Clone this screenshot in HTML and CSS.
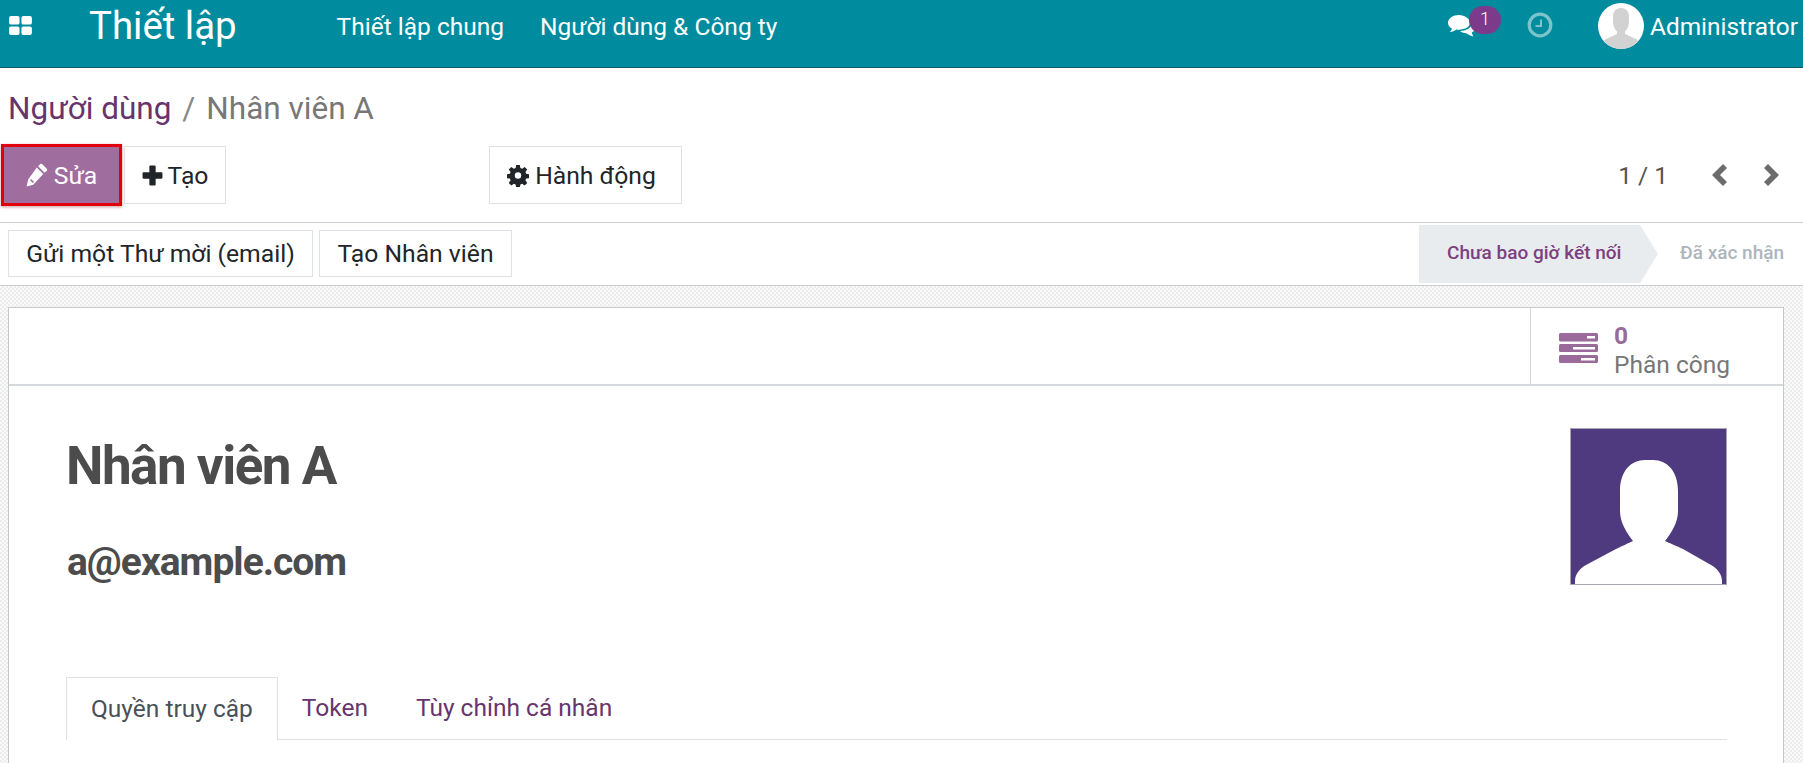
FILE: index.html
```html
<!DOCTYPE html>
<html lang="vi">
<head>
<meta charset="utf-8">
<title>Thiết lập</title>
<link rel="stylesheet" href="styles.css">
</head>
<body>
<header class="topbar">
  <svg class="apps" viewBox="0 0 24 20"><path d="M0 2a2 2 0 0 1 2-2h7a2 2 0 0 1 2 2v5a2 2 0 0 1-2 2H2a2 2 0 0 1-2-2zM13 2a2 2 0 0 1 2-2h7a2 2 0 0 1 2 2v5a2 2 0 0 1-2 2h-7a2 2 0 0 1-2-2zM0 13a2 2 0 0 1 2-2h7a2 2 0 0 1 2 2v5a2 2 0 0 1-2 2H2a2 2 0 0 1-2-2zM13 13a2 2 0 0 1 2-2h7a2 2 0 0 1 2 2v5a2 2 0 0 1-2 2h-7a2 2 0 0 1-2-2z" fill="#fff"/></svg>
  <span class="brand">Thiết lập</span>
  <nav class="menu"><span>Thiết lập chung</span><span>Người dùng &amp; Công ty</span></nav>
  <div class="systray">
    <div class="chat">
      <svg class="chat-icon" viewBox="0 0 28 24"><path d="M11 1C5 1 0 4.400 0 8.800c0 2.500 1.600 4.600 4 6-.4 1.300-1.200 2.400-2.200 3.300 2.500-.3 4.800-1.200 6.500-2.600.9.100 1.800.2 2.700.2 6 0 11-3 11-6.900S17 1 11 1z" fill="#fff"/><path d="M24 8.500c.2 4.800-5 8.400-12 8.600 1.600 1.500 4 2.200 6.400 2.100 1.900 1.500 4.200 2.600 7.100 3.300-1-1.300-1.500-2.500-1.700-3.900 2.300-1.200 3.700-3 3.700-5 0-2-1.400-3.900-3.500-5.100z" fill="#fff"/></svg>
      <span class="badge">1</span>
    </div>
    <svg class="clock" viewBox="0 0 26 26"><circle cx="13" cy="13" r="10.800" fill="none" stroke="#7cc4ca" stroke-width="3.200"/><path d="M14 7.500v6.500H8.500" fill="none" stroke="#7cc4ca" stroke-width="2"/></svg>
    <div class="user">
      <svg class="avatar" viewBox="0 0 46 46"><defs><clipPath id="round"><circle cx="23" cy="23" r="23"/></clipPath></defs><g clip-path="url(#round)"><rect width="46" height="46" fill="#fff"/><path d="M15 13c0-5 3.500-8 8-8s8 3 8 8v6c0 4-1.500 7-4 9.500v2.500l11 5c2 1 3 3 3 6v4H5v-4c0-3 1-5 3-6l11-5v-2.500c-2.500-2.500-4-5.500-4-9.500z" fill="#d2d2d2"/></g></svg>
      <span class="username">Administrator</span>
    </div>
  </div>
</header>

<section class="control">
  <div class="breadcrumb"><span class="crumb-link">Người dùng</span><span class="crumb-sep">/</span><span class="crumb-now">Nhân viên A</span></div>
  <div class="actions">
    <button class="btn btn-primary">
      <svg class="ico ico-pencil" viewBox="0 0 20 22"><path d="M14.600 1l4.400 4.300c.5.500.5 1.200 0 1.700l-2 2L11 3l2-2c.5-.4 1.200-.4 1.600 0zM9.800 4.200l5.900 5.900L6.600 20 .5 21.500l1.400-6.300zM3.600 15.700l2.700 2.700 1-1-2.700-2.700z" fill="#fff"/></svg>Sửa
    </button>
    <button class="btn btn-new">
      <svg class="ico ico-plus" viewBox="0 0 20 20"><path d="M7 1.500A1 1 0 0 1 8 .5h4a1 1 0 0 1 1 1V7h5.500a1 1 0 0 1 1 1v4a1 1 0 0 1-1 1H13v5.500a1 1 0 0 1-1 1H8a1 1 0 0 1-1-1V13H1.500a1 1 0 0 1-1-1V8a1 1 0 0 1 1-1H7z" fill="#212529"/></svg>Tạo
    </button>
    <button class="btn btn-action">
      <svg class="ico ico-gear" viewBox="0 0 24 24"><path fill-rule="evenodd" d="M10 .5h4l.6 3.400 1.900.8 2.800-2 2.800 2.800-2 2.800.8 1.900 3.600.6v4l-3.600.6-.8 1.900 2 2.800-2.800 2.800-2.800-2-1.900.8-.6 3.500h-4l-.6-3.500-1.900-.8-2.800 2-2.800-2.800 2-2.800-.8-1.900-3.600-.6v-4l3.600-.6.8-1.900-2-2.800 2.800-2.800 2.800 2 1.900-.8zM12 8.500a3.500 3.500 0 1 0 0 7 3.500 3.500 0 0 0 0-7z" fill="#212529"/></svg>Hành động
    </button>
    <div class="pager">
      <span class="pager-text">1 / 1</span>
      <svg class="chev" viewBox="0 0 15 22"><path d="M11 0l4 4-7 7 7 7-4 4L0 11z" fill="#6c6c6c"/></svg>
      <svg class="chev" viewBox="0 0 15 22"><path d="M4 0L0 4l7 7-7 7 4 4 11-11z" fill="#6c6c6c"/></svg>
    </div>
  </div>
</section>

<section class="statusbar">
  <div class="status-btns">
    <button class="btn btn-status">Gửi một Thư mời (email)</button>
    <button class="btn btn-status">Tạo Nhân viên</button>
  </div>
  <div class="stages">
    <span class="stage stage-on">Chưa bao giờ kết nối</span>
    <span class="stage stage-off">Đã xác nhận</span>
  </div>
</section>

<main class="content">
  <article class="sheet">
    <div class="stat-row">
      <div class="stat">
        <svg class="stat-icon" viewBox="0 0 39 30"><path fill-rule="evenodd" d="M1.500 0h36a1.500 1.500 0 0 1 1.500 1.500v5.500a1.500 1.500 0 0 1-1.500 1.500h-36A1.500 1.500 0 0 1 0 7V1.500A1.500 1.500 0 0 1 1.500 0zM28 3v2.500h8V3zM1.500 11h36a1.500 1.500 0 0 1 1.500 1.500v5a1.500 1.500 0 0 1-1.500 1.500h-36A1.500 1.500 0 0 1 0 17.500v-5A1.500 1.500 0 0 1 1.500 11zM14 14v2.500h22V14zM1.500 22h36a1.500 1.500 0 0 1 1.500 1.500v5a1.500 1.500 0 0 1-1.500 1.500h-36A1.500 1.500 0 0 1 0 28.500v-5A1.500 1.500 0 0 1 1.500 22zM22 25v2.500h14V25z" fill="#9a6b9a"/></svg>
        <div class="stat-text"><span class="stat-num">0</span><span class="stat-label">Phân công</span></div>
      </div>
    </div>
    <div class="sheet-body">
      <div class="head">
        <div class="titles">
          <h1 class="name">Nhân viên A</h1>
          <h2 class="mail">a@example.com</h2>
        </div>
        <div class="photo">
          <svg viewBox="0 0 155 155" class="photo-svg"><rect width="155" height="155" fill="#4f3a7f"/><path d="M49 62C49 42 60 31 74 31H82C96 31 107 42 107 62V82C107 94 100 104 94 112C98 114 106 117 112 120L140 136C147 140 151 146 151 152V155H4V152C4 146 8 140 15 136L45 120C51 117 58 114 62 112C56 104 49 94 49 82Z" fill="#fff"/></svg>
        </div>
      </div>
      <div class="tabs">
        <span class="tab tab-on">Quyền truy cập</span>
        <span class="tab">Token</span>
        <span class="tab">Tùy chỉnh cá nhân</span>
      </div>
    </div>
  </article>
</main>
</body>
</html>
```
FILE: styles.css
```css
* { box-sizing: border-box; }
html, body { margin: 0; height: 100%; overflow: hidden; }
body { font-family: Roboto, "Noto Sans", sans-serif; color: #212529; background: #fff; display: flex; flex-direction: column; }

.topbar { height: 68px; flex: none; background: #008c9e; border-bottom: 1px solid #0b5a66; display: flex; align-items: flex-start; color: #fff; }
.apps { width: 23px; height: 19px; margin: 16px 0 0 9px; flex: none; }
.brand { font-size: 38.400px; line-height: 52px; margin-left: 57px; font-weight: 400; }
.menu { display: flex; gap: 36px; margin-left: 100px; font-size: 24.500px; line-height: 54px; font-weight: 400; }
.systray { margin-left: auto; display: flex; align-items: flex-start; padding-right: 5px; }
.chat { position: relative; width: 28px; margin-top: 14px; }
.chat-icon { width: 28px; height: 24px; display: block; }
.badge { position: absolute; left: 21px; top: -8px; width: 32px; height: 28px; border-radius: 14px; background: #7c3a8a; font-size: 18px; line-height: 26px; text-align: center; font-weight: 300; }
.clock { width: 26px; height: 26px; margin: 12px 0 0 51px; }
.user { display: flex; align-items: flex-start; margin-left: 45px; }
.avatar { width: 46px; height: 46px; margin-top: 3px; }
.username { font-size: 24.400px; line-height: 54px; margin-left: 6px; white-space: nowrap; }

.control { height: 155px; flex: none; border-bottom: 1px solid #ccc; padding: 0 2px; }
.breadcrumb { font-size: 31.500px; line-height: 36px; padding: 23px 0 0 6px; display: flex; height: 77px; }
.crumb-link { color: #68346d; }
.crumb-sep { color: #888; margin: 0 11px; }
.crumb-now { color: #777; }
.actions { display: flex; align-items: center; height: 60px; }
.btn { font-family: inherit; font-size: 24.700px; background: #fff; border: 1px solid #dee2e6; color: #212529; display: inline-flex; align-items: center; justify-content: center; padding: 0; white-space: nowrap; }
.ico { flex: none; display: block; }
.btn-primary { width: 121px; height: 62px; margin-left: -1px; background: #a06d9f; color: #fff; border: 3px solid #e2000d; box-shadow: 0 1px 3px rgba(120,0,0,.4); }
.ico-pencil { width: 22px; height: 24px; margin-right: 6px; }
.btn-new { width: 102px; height: 58px; margin-left: 2px; }
.ico-plus { width: 21px; height: 21px; margin-right: 5px; }
.btn-action { width: 193px; height: 58px; margin-left: 263px; padding-right: 8px; }
.ico-gear { width: 22px; height: 23px; margin-right: 6px; }
.pager { margin-left: auto; display: flex; align-items: center; padding-right: 22px; }
.pager-text { font-size: 24.500px; color: #555; margin-right: 44px; }
.chev { width: 15px; height: 22px; }
.chev + .chev { margin-left: 37px; }

.statusbar { height: 63px; flex: none; border-bottom: 1px solid #ccc; display: flex; justify-content: space-between; padding-top: 7px; }
.status-btns { display: flex; gap: 6px; padding-left: 8px; height: 47px; }
.btn-status { height: 47px; padding: 0 18px; }
.btn-status:first-child { width: 305px; }
.btn-status:last-child { width: 193px; }
.stages { display: flex; height: 58px; margin-top: -5px; font-size: 19px; font-weight: 500; line-height: 56px; }
.stage { display: block; }
.stage-on { width: 221px; padding-left: 28px; background: #e9ecef; color: #7c3f80; position: relative; white-space: nowrap; }
.stage-on::after { content: ""; position: absolute; left: 100%; top: 0; border-left: 18px solid #e9ecef; border-top: 29px solid transparent; border-bottom: 29px solid transparent; }
.stage-off { width: 163px; padding-left: 40px; color: #adb5bd; white-space: nowrap; }

.content { flex: 1; min-height: 0; padding: 21px 19px 0 8px; background-color: #f5f5f5; background-image: conic-gradient(#ececec 25%, #fafafa 25% 50%, #ececec 50% 75%, #fafafa 75%); background-size: 4px 4px; }
.sheet { height: 100%; background: #fff; border: 1px solid #c8c8c8; border-bottom: 0; }
.stat-row { height: 78px; border-bottom: 2px solid #d5d9dd; display: flex; justify-content: flex-end; }
.stat { width: 253px; height: 76px; border-left: 1px solid #d5d9dd; display: flex; padding-left: 28px; }
.stat-icon { width: 39px; height: 30px; margin-top: 25px; flex: none; }
.stat-text { display: flex; flex-direction: column; margin-left: 16px; padding-top: 14px; }
.stat-num { font-size: 24.500px; line-height: 28px; font-weight: 700; color: #9a6b9a; }
.stat-label { font-size: 24.500px; line-height: 30px; color: #777; white-space: nowrap; }
.sheet-body { padding: 42px 56px 0 57px; }
.head { display: flex; justify-content: space-between; height: 249px; }
.titles { padding-top: 6px; }
.name { margin: 0; font-size: 53px; line-height: 64px; font-weight: 700; color: #4c4c4c; letter-spacing: -1.500px; }
.mail { margin: 40px 0 0 1px; font-size: 39px; line-height: 48px; font-weight: 700; color: #4c4c4c; letter-spacing: -1px; }
.photo { width: 157px; height: 157px; border: 1px solid #a8a4b0; flex: none; }
.photo-svg { display: block; width: 155px; height: 155px; }
.tabs { display: flex; height: 63px; border-bottom: 1px solid #dee2e6; font-size: 24.500px; line-height: 61px; color: #68346d; }
.tab { padding: 0 24px; white-space: nowrap; }
.tab-on { color: #495057; background: #fff; border: 1px solid #dee2e6; border-bottom: 0; height: 63px; }
```
